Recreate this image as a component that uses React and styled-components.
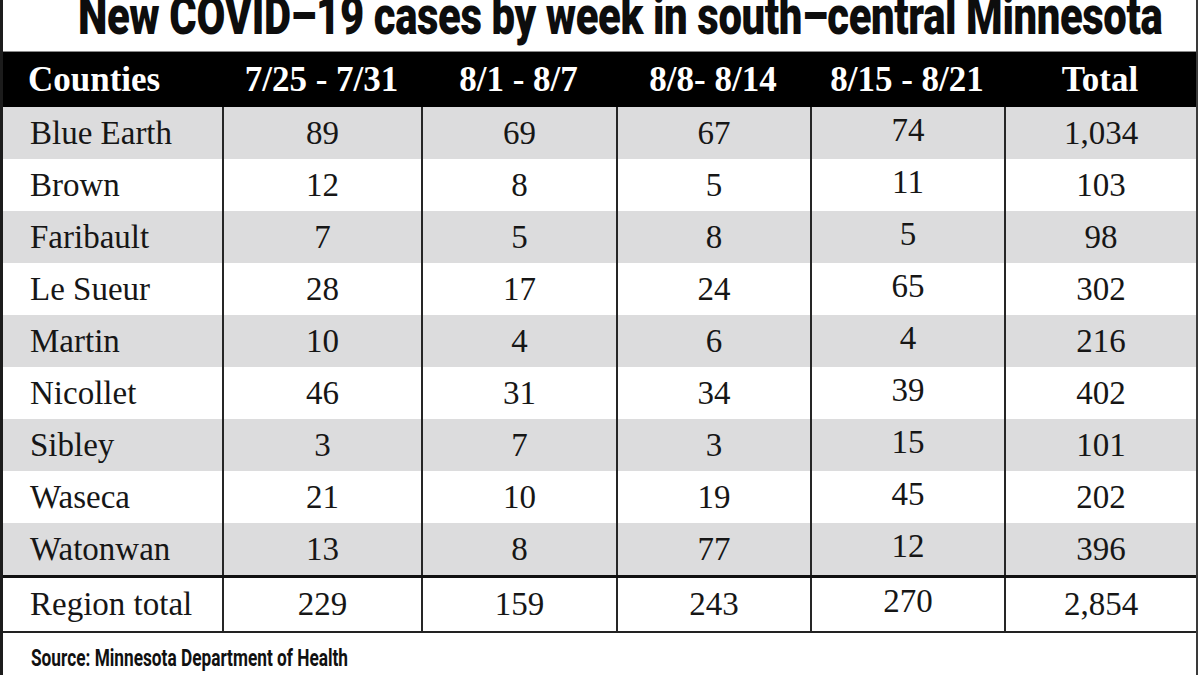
import React, { useLayoutEffect, useRef, useState } from 'react';
import styled, { createGlobalStyle } from 'styled-components';

const GlobalStyle = createGlobalStyle`
  html, body {
    margin: 0;
    padding: 0;
    background: #fff;
  }
  body {
    font-family: "Liberation Serif", "Times New Roman", serif;
    color: #161616;
  }
`;

const COLS = '219px 199px 195px 194px 194px 1fr';

const Frame = styled.div`
  width: 1198px;
  box-sizing: border-box;
  border-left: 3px solid #1c1c1c;
  border-right: 2px solid #3a3a3a;
  background: #fff;
`;

const TitleBar = styled.div`
  height: 51px;
  border-bottom: 1px solid #8a8a8a;
  padding-left: 75px;
  overflow: hidden;
`;

const Squeeze = styled.span`
  display: inline-block;
  white-space: nowrap;
  transform-origin: left center;
`;

const Title = styled.h1`
  margin: 0;
  font-family: Roboto, "Liberation Sans", sans-serif;
  font-weight: 900;
  font-size: 54px;
  line-height: 32px;
  letter-spacing: -0.5px;
  color: #0d0d0d;
`;

const Row = styled.div`
  display: grid;
  grid-template-columns: ${COLS};
  height: ${({ $height }) => $height || 52}px;
  background: ${({ $shade }) => ($shade ? '#dcdcdd' : '#fff')};
`;

const HeadRow = styled(Row)`
  background: #000;
  color: #fff;
`;

const TotalRow = styled(Row)`
  border-top: 3px solid #111;
  border-bottom: 2px solid #222;
`;

const Cell = styled.div`
  display: flex;
  align-items: center;
  justify-content: ${({ $lead }) => ($lead ? 'flex-start' : 'center')};
  padding-left: ${({ $lead }) => ($lead ? '27px' : '0')};
  padding-bottom: ${({ $raise }) => ($raise ? '6px' : '0')};
  border-left: ${({ $lead }) => ($lead ? 'none' : '2px solid #262626')};
  font-size: 33px;
  white-space: nowrap;
`;

const HeadCell = styled.div`
  display: flex;
  align-items: center;
  justify-content: ${({ $lead }) => ($lead ? 'flex-start' : 'center')};
  padding-left: ${({ $lead }) => ($lead ? '25px' : '0')};
  font-size: 35px;
  font-weight: 700;
  white-space: nowrap;
`;

const SourceBar = styled.div`
  height: 42px;
  display: flex;
  align-items: center;
  padding: 8px 0 0 28px;
  box-sizing: border-box;
`;

const Source = styled.span`
  font-family: Roboto, "Liberation Sans", sans-serif;
  font-weight: 700;
  font-size: 24px;
  color: #111;
`;

// squeezes its text horizontally to a target width, like a condensed face
const FitText = ({ width, children }) => {
  const ref = useRef(null);
  const [scale, setScale] = useState(1);
  useLayoutEffect(() => {
    if (ref.current) setScale(width / ref.current.scrollWidth);
  }, [width]);
  return (
    <Squeeze ref={ref} style={{ transform: `scaleX(${scale})` }}>
      {children}
    </Squeeze>
  );
};

const heads = ['Counties', '7/25 - 7/31', '8/1 - 8/7', '8/8- 8/14', '8/15 - 8/21', 'Total'];

const counties = [
  ['Blue Earth', '89', '69', '67', '74', '1,034'],
  ['Brown', '12', '8', '5', '11', '103'],
  ['Faribault', '7', '5', '8', '5', '98'],
  ['Le Sueur', '28', '17', '24', '65', '302'],
  ['Martin', '10', '4', '6', '4', '216'],
  ['Nicollet', '46', '31', '34', '39', '402'],
  ['Sibley', '3', '7', '3', '15', '101'],
  ['Waseca', '21', '10', '19', '45', '202'],
  ['Watonwan', '13', '8', '77', '12', '396'],
];

const regionTotal = ['Region total', '229', '159', '243', '270', '2,854'];

const renderCells = (row) =>
  row.map((v, i) => (
    <Cell key={i} $lead={i === 0} $raise={i === 4}>
      {v}
    </Cell>
  ));

const App = () => (
  <>
    <GlobalStyle />
    <Frame>
      <TitleBar>
        <Title>
          <FitText width={1084}>New COVID–19 cases by week in south–central Minnesota</FitText>
        </Title>
      </TitleBar>
      <HeadRow $height={55}>
        {heads.map((h, i) => (
          <HeadCell key={h} $lead={i === 0}>
            {h}
          </HeadCell>
        ))}
      </HeadRow>
      {counties.map((row, i) => (
        <Row key={row[0]} $shade={i % 2 === 0}>
          {renderCells(row)}
        </Row>
      ))}
      <TotalRow $height={53}>{renderCells(regionTotal)}</TotalRow>
      <SourceBar>
        <Source>
          <FitText width={317}>Source: Minnesota Department of Health</FitText>
        </Source>
      </SourceBar>
    </Frame>
  </>
);

export default App;
